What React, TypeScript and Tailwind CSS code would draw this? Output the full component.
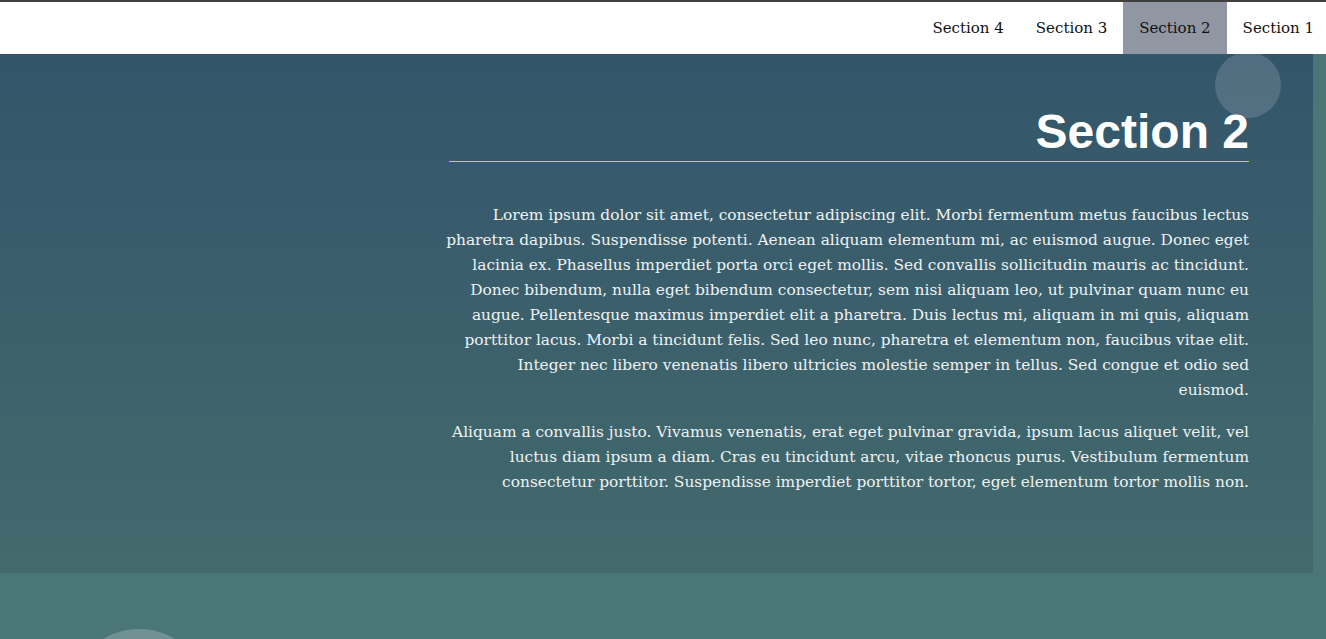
import React from "react";

const navItems = ["Section 4", "Section 3", "Section 2", "Section 1"];

const para1 = [
  "Lorem ipsum dolor sit amet, consectetur adipiscing elit. Morbi fermentum metus faucibus lectus",
  "pharetra dapibus. Suspendisse potenti. Aenean aliquam elementum mi, ac euismod augue. Donec eget",
  "lacinia ex. Phasellus imperdiet porta orci eget mollis. Sed convallis sollicitudin mauris ac tincidunt.",
  "Donec bibendum, nulla eget bibendum consectetur, sem nisi aliquam leo, ut pulvinar quam nunc eu",
  "augue. Pellentesque maximus imperdiet elit a pharetra. Duis lectus mi, aliquam in mi quis, aliquam",
  "porttitor lacus. Morbi a tincidunt felis. Sed leo nunc, pharetra et elementum non, faucibus vitae elit.",
  "Integer nec libero venenatis libero ultricies molestie semper in tellus. Sed congue et odio sed",
  "euismod.",
];

const para2 = [
  "Aliquam a convallis justo. Vivamus venenatis, erat eget pulvinar gravida, ipsum lacus aliquet velit, vel",
  "luctus diam ipsum a diam. Cras eu tincidunt arcu, vitae rhoncus purus. Vestibulum fermentum",
  "consectetur porttitor. Suspendisse imperdiet porttitor tortor, eget elementum tortor mollis non.",
];

function Para({ lines, className }: { lines: string[]; className: string }) {
  return (
    <div className={"flex flex-col items-end text-[15.4px] leading-[25px] " + className}>
      {lines.map((line, i) => (
        <span key={i} className="whitespace-nowrap">
          {line}
        </span>
      ))}
    </div>
  );
}

export default function App() {
  return (
    <div className="h-screen bg-[#4b7678] overflow-hidden" style={{ fontFamily: '"DejaVu Serif", serif' }}>
      {/* top nav */}
      <nav className="h-[54px] bg-white border-t-2 border-[#3f3f3f] flex justify-end">
        {navItems.map((item) => (
          <a
            key={item}
            className={
              "h-full flex items-center pl-[16px] text-[15px] text-[#111] " +
              (item === "Section 1" ? "pr-[12px] " : "pr-[16px] ") +
              (item === "Section 2" ? "bg-[#9097a3]" : "")
            }
          >
            {item}
          </a>
        ))}
      </nav>

      {/* section 2 */}
      <section className="relative mr-[13px] h-[519px] bg-gradient-to-b from-[#33556a] to-[#436a6d] flex justify-end pr-[64px]">
        <div className="absolute left-[1215px] top-[-2px] w-[66px] h-[66px] rounded-full bg-white/15" />
        <div className="w-[800px] text-right text-[#eef2f3]">
          <h2
            className="text-[48px] font-bold leading-none pt-[54px] pb-[5px] border-b border-[#c8d24e] text-white"
            style={{ fontFamily: '"Liberation Sans", Arial, sans-serif' }}
          >
            Section 2
          </h2>
          <Para lines={para1} className="mt-[41px]" />
          <Para lines={para2} className="mt-[17px]" />
        </div>
      </section>

      {/* next section */}
      <section className="relative h-[66px]">
        <div className="absolute left-[69px] top-[56px] w-[140px] h-[140px] rounded-full bg-white/20" />
      </section>
    </div>
  );
}
